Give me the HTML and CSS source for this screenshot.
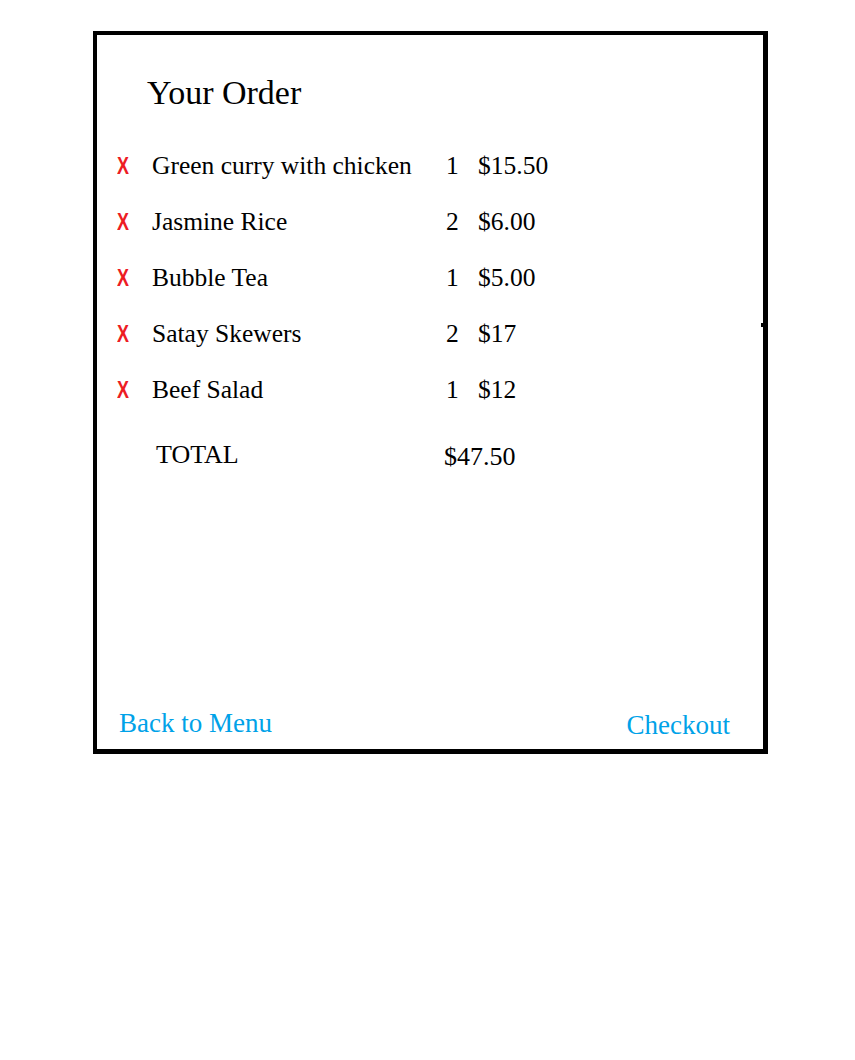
FILE: index.html
```html
<!DOCTYPE html>
<html lang="en">
<head>
<meta charset="utf-8">
<title>Your Order</title>
<link rel="stylesheet" href="styles.css">
</head>
<body>
<div class="order">
  <h1 class="title">Your Order</h1>
  <div class="items">
    <span class="remove">X</span><span class="name">Green curry with chicken</span><span class="qty">1</span><span class="price">$15.50</span>
    <span class="remove">X</span><span class="name">Jasmine Rice</span><span class="qty">2</span><span class="price">$6.00</span>
    <span class="remove">X</span><span class="name">Bubble Tea</span><span class="qty">1</span><span class="price">$5.00</span>
    <span class="remove">X</span><span class="name">Satay Skewers</span><span class="qty">2</span><span class="price">$17</span>
    <span class="remove">X</span><span class="name">Beef Salad</span><span class="qty">1</span><span class="price">$12</span>
  </div>
  <div class="total">
    <span class="total-label">TOTAL</span>
    <span class="total-amount">$47.50</span>
  </div>
  <div class="actions">
    <a class="link" href="#">Back to Menu</a>
    <a class="link checkout" href="#">Checkout</a>
  </div>
</div>
</body>
</html>
```

FILE: styles.css
```css
html, body {
  margin: 0;
  padding: 0;
  background: #ffffff;
}

body {
  font-family: "Liberation Serif", "Times New Roman", serif;
  color: #000000;
}

.order {
  position: relative;
  box-sizing: border-box;
  width: 675px;
  height: 723px;
  margin: 31px 0 0 93px;
  border-style: solid;
  border-color: #000000;
  border-width: 4px 5px 5px 4px;
  display: flex;
  flex-direction: column;
}

.order::after {
  content: "";
  position: absolute;
  right: 0;
  top: 288px;
  width: 2px;
  height: 4px;
  background: #000000;
}

.title {
  margin: 38px 0 0 50px;
  font-size: 34px;
  font-weight: normal;
  line-height: 40px;
}

.items {
  margin-top: 25px;
  display: grid;
  grid-template-columns: 35px 291px 35px auto;
  grid-auto-rows: 56px;
  padding-left: 20px;
  font-size: 25.5px;
  line-height: 56px;
}

.remove {
  font-family: "Liberation Sans", Arial, sans-serif;
  font-size: 23px;
  font-weight: bold;
  color: #ed1c24;
  display: inline-block;
  transform: scaleX(0.78);
  transform-origin: left center;
}

.qty {
  padding-left: 3px;
}

.total {
  margin-top: 17px;
  padding-left: 20px;
  display: grid;
  grid-template-columns: 35px 291px auto;
  font-size: 26px;
  line-height: 40px;
}

.total-label {
  grid-column: 2;
  padding-left: 4px;
}

.total-amount {
  grid-column: 3;
  padding-left: 1px;
  position: relative;
  top: 2px;
}

.actions {
  margin-top: auto;
  display: flex;
  justify-content: space-between;
  align-items: flex-start;
  padding: 0 33px 9px 22px;
}

.link {
  font-size: 27px;
  line-height: 30px;
  color: #00a2e8;
  text-decoration: none;
}

.checkout {
  margin-top: 2px;
}
```
